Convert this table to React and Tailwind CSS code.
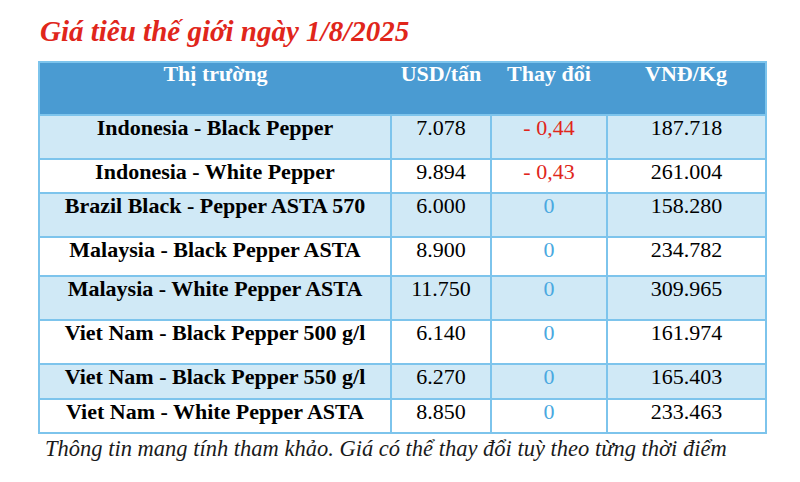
import React from "react";

const rows = [
  { name: "Indonesia - Black Pepper", usd: "7.078", change: "- 0,44", vnd: "187.718", h: "h-[44px]" },
  { name: "Indonesia - White Pepper", usd: "9.894", change: "- 0,43", vnd: "261.004", h: "h-[34px]" },
  { name: "Brazil Black - Pepper ASTA 570", usd: "6.000", change: "0", vnd: "158.280", h: "h-[44px]" },
  { name: "Malaysia - Black Pepper ASTA", usd: "8.900", change: "0", vnd: "234.782", h: "h-[39px]" },
  { name: "Malaysia - White Pepper ASTA", usd: "11.750", change: "0", vnd: "309.965", h: "h-[44px]" },
  { name: "Viet Nam - Black Pepper 500 g/l", usd: "6.140", change: "0", vnd: "161.974", h: "h-[44px]" },
  { name: "Viet Nam - Black Pepper 550 g/l", usd: "6.270", change: "0", vnd: "165.403", h: "h-[35px]" },
  { name: "Viet Nam - White Pepper ASTA", usd: "8.850", change: "0", vnd: "233.463", h: "h-[34px]" },
];

const App = () => {
  return (
    <div className="w-[800px] h-[482px] bg-white pl-[38px] font-['Liberation_Serif',serif] text-black">
      {/* TITLE */}
      <h1 className="pt-[13px] pl-[2px] h-[61px] text-[29px] leading-[36px] font-bold italic text-[#e0261b]">
        Giá tiêu thế giới ngày 1/8/2025
      </h1>

      {/* TABLE */}
      <table className="w-[727px] border-collapse border-2 border-[#7dc4ec] table-fixed text-[22px] leading-[23px]">
        <colgroup>
          <col className="w-[352px]" />
          <col className="w-[100px]" />
          <col className="w-[116px]" />
          <col className="w-[159px]" />
        </colgroup>
        <thead>
          <tr className="h-[53px] bg-[#4a9bd2] text-white">
            <th className="align-top text-center font-bold p-0 leading-[22px]">Thị trường</th>
            <th className="align-top text-center font-bold p-0 leading-[22px]">USD/tấn</th>
            <th className="align-top text-center font-bold p-0 leading-[22px]">Thay đổi</th>
            <th className="align-top text-center font-bold p-0 leading-[22px]">VNĐ/Kg</th>
          </tr>
        </thead>
        <tbody>
          {rows.map((r, i) => (
            <tr key={r.name} className={`${r.h} ${i % 2 === 0 ? "bg-[#d0e9f6]" : "bg-white"}`}>
              <td className="border-2 border-[#7dc4ec] align-top text-center font-bold p-0">{r.name}</td>
              <td className="border-2 border-[#7dc4ec] align-top text-center p-0">{r.usd}</td>
              <td className={`border-2 border-[#7dc4ec] align-top text-center p-0 ${r.change === "0" ? "text-[#4aa8e0]" : "text-[#e0261b]"}`}>
                {r.change}
              </td>
              <td className="border-2 border-[#7dc4ec] align-top text-center p-0">{r.vnd}</td>
            </tr>
          ))}
        </tbody>
      </table>

      {/* NOTE */}
      <p className="pl-[7px] pt-[2px] text-[22.5px] leading-[26px] italic text-[#1a1a1a]">
        Thông tin mang tính tham khảo. Giá có thể thay đổi tuỳ theo từng thời điểm
      </p>
    </div>
  );
};

export default App;
